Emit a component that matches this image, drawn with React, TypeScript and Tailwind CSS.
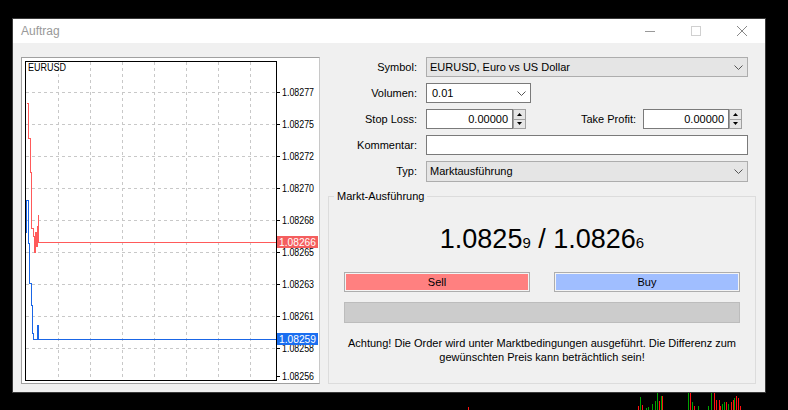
import React from 'react'

const axis = [
  { v: '1.08277', y: 92 },
  { v: '1.08275', y: 124 },
  { v: '1.08272', y: 156 },
  { v: '1.08270', y: 188 },
  { v: '1.08268', y: 220 },
  { v: '1.08265', y: 252 },
  { v: '1.08263', y: 284 },
  { v: '1.08261', y: 316 },
  { v: '1.08258', y: 348 },
  { v: '1.08256', y: 376 },
]

const gridX = [58, 90, 122, 154, 186, 218, 250]
const gridY = [92, 124, 156, 188, 220, 252, 284, 316, 348]

// bars of the chart window behind the dialog
const bars: [number, number, string][] = [
  [468, 407, 'r'], [638, 406, 'r'], [640, 397, 'g'], [642, 405, 'r'], [646, 408, 'g'], [648, 407, 'g'],
  [652, 404, 'g'], [655, 401, 'g'], [657, 393, 'g'], [659, 401, 'r'], [661, 396, 'g'], [662, 396, 'r'],
  [688, 393, 'g'], [690, 393, 'r'], [692, 402, 'g'], [694, 406, 'r'], [698, 406, 'g'], [708, 406, 'g'],
  [711, 393, 'g'], [714, 393, 'r'], [716, 400, 'r'], [719, 400, 'r'], [720, 406, 'r'], [722, 404, 'g'],
  [724, 402, 'g'], [726, 402, 'r'], [728, 404, 'g'], [731, 402, 'r'], [733, 400, 'r'], [734, 398, 'g'],
  [736, 396, 'r'], [738, 398, 'r'], [740, 406, 'r'],
]

function Chart() {
  return (
    <div className="h-[327px] w-[299px] border border-[#a0a0a0] border-r-[#c8c8c8] bg-white">
      <svg width="297" height="325" className="block">
        <g transform="translate(-22 -58)" fontFamily="'Liberation Sans', Arial, sans-serif">
          {gridX.map((x) => (
            <line key={x} x1={x + 0.5} y1={62} x2={x + 0.5} y2={380} stroke="#c8c8c8" strokeDasharray="3 3" />
          ))}
          {gridY.map((y) => (
            <line key={y} x1={26} y1={y + 0.5} x2={276} y2={y + 0.5} stroke="#c8c8c8" strokeDasharray="3 3" />
          ))}
          <rect x="25.5" y="61.5" width="251" height="319" fill="none" stroke="#000" />
          {axis.map((a) => (
            <g key={a.v}>
              <line x1={277} y1={a.y + 0.5} x2={280} y2={a.y + 0.5} stroke="#000" />
              <text x={282} y={a.y + 4} fontSize="10" textLength="32" lengthAdjust="spacingAndGlyphs" fill="#000">
                {a.v}
              </text>
            </g>
          ))}
          <text x={28} y={71} fontSize="10" textLength="38" lengthAdjust="spacingAndGlyphs" fill="#000">
            EURUSD
          </text>
          <path
            d="M26.5,103.5 H28.5 V138.5 H30.5 V172.5 H31.5 V228.5 H33.5 V236.5 H34.5 V252.5 H35.5 V232.5 H36.5 V246.5 H37.5 V226.5 H38.5 V214.5 V242.5 H39.5 H276"
            fill="none"
            stroke="#ff5a5a"
            shapeRendering="crispEdges"
          />
          <path
            d="M26.5,232.5 V200.5 H28.5 V243.5 H29.5 V283.5 H31.5 V305.5 H32.5 V333.5 H33.5 V339.5 H37.5 V325.5 H38.5 V339.5 H276"
            fill="none"
            stroke="#1a66e6"
            shapeRendering="crispEdges"
          />
          <rect x="277" y="236" width="41" height="12" fill="#f45e5e" />
          <text x={279} y={246} fontSize="10" textLength="37" lengthAdjust="spacingAndGlyphs" fill="#fff">
            1.08266
          </text>
          <rect x="277" y="333" width="41" height="12" fill="#1a6ef0" />
          <text x={279} y={343} fontSize="10" textLength="37" lengthAdjust="spacingAndGlyphs" fill="#fff">
            1.08259
          </text>
        </g>
      </svg>
    </div>
  )
}

function Chevron() {
  return (
    <svg width="9" height="5" className="block">
      <polyline points="0.5,0.5 4.5,4.5 8.5,0.5" fill="none" stroke="#555" />
    </svg>
  )
}

function Spinner() {
  return (
    <div className="flex h-full w-[13px] flex-col border border-[#a0a0a0] bg-[#e6e6e6]">
      <div className="flex flex-1 items-center justify-center border-b border-[#a0a0a0]">
        <svg width="5" height="3" className="block">
          <polygon points="2.5,0 5,3 0,3" fill="#000" />
        </svg>
      </div>
      <div className="flex flex-1 items-center justify-center">
        <svg width="5" height="3" className="block">
          <polygon points="0,0 5,0 2.5,3" fill="#000" />
        </svg>
      </div>
    </div>
  )
}

function Label({ children }: { children: React.ReactNode }) {
  return <div className="w-[98px] shrink-0 pr-[9px] text-right">{children}</div>
}

export default function App() {
  return (
    <div className="relative h-[410px] w-[788px] overflow-hidden bg-black pt-[18px] pl-[12px] font-['Liberation_Sans',Arial,sans-serif] text-[11px] text-black">
      <div className="h-[375px] w-[754px] border border-[#3a3a3a] bg-[#f0f0f0]">
        {/* title bar */}
        <div className="flex h-[24px] items-center bg-white">
          <span className="pl-[8px] text-[12px] text-[#999]">Auftrag</span>
          <div className="ml-auto flex h-full">
            <div className="flex w-[46px] items-center justify-center">
              <svg width="10" height="10" className="block">
                <line x1="0" y1="5.5" x2="10" y2="5.5" stroke="#999" />
              </svg>
            </div>
            <div className="flex w-[46px] items-center justify-center">
              <svg width="10" height="10" className="block">
                <rect x="0.5" y="0.5" width="9" height="9" fill="none" stroke="#d0d0d0" />
              </svg>
            </div>
            <div className="flex w-[46px] items-center justify-center">
              <svg width="10" height="10" className="block">
                <path d="M0,0 L10,10 M10,0 L0,10" stroke="#888" />
              </svg>
            </div>
          </div>
        </div>

        {/* body */}
        <div className="flex pt-[14px] pl-[8px]">
          <Chart />
          <div className="ml-[8px] flex w-[428px] flex-col">
            <div className="flex flex-col gap-[6px]">
              <div className="flex h-[20px] items-center pr-[8px]">
                <Label>Symbol:</Label>
                <div className="flex h-full flex-1 items-center border border-[#adadad] bg-[#e5e5e5] pr-[4px] pl-[3px]">
                  <span className="flex-1">EURUSD, Euro vs US Dollar</span>
                  <Chevron />
                </div>
              </div>
              <div className="flex h-[20px] items-center">
                <Label>Volumen:</Label>
                <div className="flex h-full w-[105px] items-center border border-[#7a7a7a] bg-white pr-[4px] pl-[5px]">
                  <span className="flex-1">0.01</span>
                  <Chevron />
                </div>
              </div>
              <div className="flex h-[20px] items-center pr-[14px]">
                <Label>Stop Loss:</Label>
                <div className="flex h-full w-[87px] items-center justify-end border border-[#7a7a7a] bg-white pr-[4px]">
                  0.00000
                </div>
                <Spinner />
                <div className="flex-1 pr-[7px] text-right">Take Profit:</div>
                <div className="flex h-full w-[86px] items-center justify-end border border-[#7a7a7a] bg-white pr-[4px]">
                  0.00000
                </div>
                <Spinner />
              </div>
              <div className="flex h-[20px] items-center pr-[8px]">
                <Label>Kommentar:</Label>
                <div className="h-full flex-1 border border-[#7a7a7a] bg-white" />
              </div>
              <div className="flex h-[21px] items-center pr-[8px]">
                <Label>Typ:</Label>
                <div className="flex h-full flex-1 items-center border border-[#adadad] bg-[#e5e5e5] pr-[4px] pl-[3px]">
                  <span className="flex-1">Marktausführung</span>
                  <Chevron />
                </div>
              </div>
            </div>

            {/* market execution group */}
            <div className="relative mt-[14px] h-[188px] border border-[#dcdcdc] px-[15px]">
              <span className="absolute -top-[8px] left-[5px] bg-[#f0f0f0] px-[3px] leading-[14px]">
                Markt-Ausführung
              </span>
              <div className="mt-[27px] h-[30px] text-center text-[27px] leading-[30px]">
                1.0825<span className="text-[15px]">9</span> / 1.0826<span className="text-[15px]">6</span>
              </div>
              <div className="mt-[18px] grid grid-cols-2 gap-[24px]">
                <div className="h-[20px] border border-[#adadad] bg-[#f4f4f4] p-[1px]">
                  <div className="flex h-full items-center justify-center bg-[#ff8080]">Sell</div>
                </div>
                <div className="h-[20px] border border-[#adadad] bg-[#f4f4f4] p-[1px]">
                  <div className="flex h-full items-center justify-center bg-[#a0beff]">Buy</div>
                </div>
              </div>
              <div className="mt-[10px] h-[21px] border border-[#bcbcbc] bg-[#cccccc]" />
              <p className="mt-[13px] text-center leading-[14px]">
                Achtung! Die Order wird unter Marktbedingungen ausgeführt. Die Differenz zum
                <br />
                gewünschten Preis kann beträchtlich sein!
              </p>
            </div>
          </div>
        </div>
      </div>

      {/* chart bars behind the dialog */}
      <svg width="788" height="17" className="absolute bottom-0 left-0 block">
        {bars.map(([x, y, c], i) => (
          <line key={i} x1={x + 0.5} y1={y - 393} x2={x + 0.5} y2={17} stroke={c === 'g' ? '#00a000' : '#ff1010'} />
        ))}
      </svg>
    </div>
  )
}
